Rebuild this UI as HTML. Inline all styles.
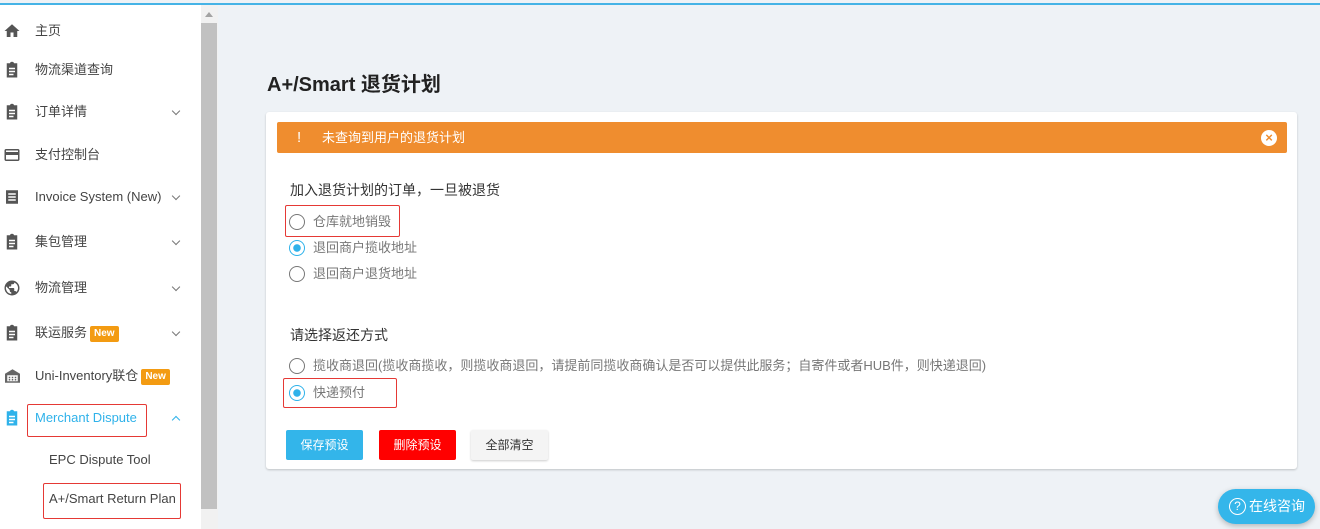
<!DOCTYPE html>
<html><head><meta charset="utf-8"><style>
*{margin:0;padding:0;box-sizing:border-box}
body{width:1320px;height:529px;overflow:hidden;background:#eef2f6;font-family:"Liberation Sans","Noto Sans CJK SC",sans-serif;position:relative}
.top{position:absolute;left:0;top:3px;width:1320px;height:2px;background:#45b3e6}
.side{position:absolute;left:0;top:5px;width:201px;height:524px;background:#fff}
.sb{position:absolute;left:201px;top:5px;width:17px;height:524px;background:#f1f1f1}
.thumb{position:absolute;left:201px;top:23px;width:16px;height:486px;background:#c1c1c1}
.it{position:absolute;left:0;width:200px;font-size:13px;color:#444;height:20px;line-height:20px}
.it .t{position:absolute;left:35px;top:0;white-space:nowrap}
.it svg.ic{position:absolute;left:3px;top:1px}
.chev{position:absolute;left:173px;top:6px;width:6px;height:6px;border-right:1.5px solid #777;border-bottom:1.5px solid #777;transform:rotate(45deg)}
.new{display:inline-block;background:#f39b12;color:#fff;font-size:10px;font-weight:bold;padding:0 4px;line-height:16px;border-radius:2px;margin-left:3px;vertical-align:1px}
.red{position:absolute;border:1.5px solid #e53935;border-radius:2px}
.card{position:absolute;left:266px;top:112px;width:1031px;height:357px;background:#fff;border-radius:3px;box-shadow:0 1px 2px rgba(0,0,0,.2)}
.alert{position:absolute;left:277px;top:122px;width:1010px;height:31px;background:#ef8d2f;border-radius:2px;color:#fff;font-size:13px;line-height:31px}
.r{position:absolute;font-size:13px;color:#777;line-height:18px;padding-left:24px;white-space:nowrap}
.r:before{content:"";position:absolute;left:0;top:1px;width:14px;height:14px;border:1.7px solid #777;border-radius:50%}
.r.on:before{border-color:#2fb2ea;background:radial-gradient(circle,#2fb2ea 3.5px,#fff 4px)}
.btn{position:absolute;top:430px;height:30px;font-size:12px;line-height:30px;text-align:center;border-radius:2px}
</style></head><body>
<div class="top"></div>
<div class="side"></div>
<div class="sb"></div><div class="thumb"></div>
<div style="position:absolute;left:205px;top:12px;width:0;height:0;border-left:4px solid transparent;border-right:4px solid transparent;border-bottom:5px solid #a3a3a3"></div>

<div class="it" style="top:21px"><svg class="ic" width="18" height="18" viewBox="0 0 24 24"><path d="M10 20v-6h4v6h5v-8h3L12 3 2 12h3v8z" fill="#555"/></svg><span class="t">主页</span></div>
<div class="it" style="top:60px"><svg class="ic" width="18" height="18" viewBox="0 0 24 24"><path d="M19 3h-4.2C14.4 1.8 13.3 1 12 1s-2.4.8-2.8 2H5v19h14zM8 9h8v2H8zm0 4h8v2H8zm0 4h6v2H8z" fill="#555"/></svg><span class="t">物流渠道查询</span></div>
<div class="it" style="top:102px"><svg class="ic" width="18" height="18" viewBox="0 0 24 24"><path d="M19 3h-4.2C14.4 1.8 13.3 1 12 1s-2.4.8-2.8 2H5v19h14zM8 9h8v2H8zm0 4h8v2H8zm0 4h6v2H8z" fill="#555"/></svg><span class="t">订单详情</span><i class="chev"></i></div>
<div class="it" style="top:145px"><svg class="ic" width="18" height="18" viewBox="0 0 24 24"><path d="M20 4H4c-1.1 0-2 .9-2 2v12c0 1.1.9 2 2 2h16c1.1 0 2-.9 2-2V6c0-1.1-.9-2-2-2zm0 14H4v-6h16zm0-10H4V6h16z" fill="#555"/></svg><span class="t">支付控制台</span></div>
<div class="it" style="top:187px"><svg class="ic" width="18" height="18" viewBox="0 0 24 24"><path d="M4 3h16v18H4zM7 7h10v2H7zm0 4h10v2H7zm0 4h10v2H7z" fill="#555" fill-rule="evenodd"/></svg><span class="t">Invoice System (New)</span><i class="chev"></i></div>
<div class="it" style="top:232px"><svg class="ic" width="18" height="18" viewBox="0 0 24 24"><path d="M19 3h-4.2C14.4 1.8 13.3 1 12 1s-2.4.8-2.8 2H5v19h14zM8 9h8v2H8zm0 4h8v2H8zm0 4h6v2H8z" fill="#555"/></svg><span class="t">集包管理</span><i class="chev"></i></div>
<div class="it" style="top:278px"><svg class="ic" width="18" height="18" viewBox="0 0 24 24"><path d="M12 2a10 10 0 100 20 10 10 0 000-20zm-1 17.9A8 8 0 014.2 9.8L9 14.6v1a2 2 0 002 2zm6.9-2.5A2 2 0 0016 16h-1v-3a1 1 0 00-1-1H8v-2h2a1 1 0 001-1V7h2a2 2 0 002-2v-.4a8 8 0 012.9 12.8z" fill="#555"/></svg><span class="t">物流管理</span><i class="chev"></i></div>
<div class="it" style="top:323px"><svg class="ic" width="18" height="18" viewBox="0 0 24 24"><path d="M19 3h-4.2C14.4 1.8 13.3 1 12 1s-2.4.8-2.8 2H5v19h14zM8 9h8v2H8zm0 4h8v2H8zm0 4h6v2H8z" fill="#555"/></svg><span class="t">联运服务<span class="new">New</span></span><i class="chev"></i></div>
<div class="it" style="top:366px"><svg class="ic" width="19" height="18" viewBox="0 0 24 24"><path d="M12 3L2 9v12h20V9zM5 11h14v8H5z M7 13h2v2H7zm4 0h2v2h-2zm4 0h2v2h-2zm-8 3h2v2H7zm4 0h2v2h-2zm4 0h2v2h-2z" fill="#666" fill-rule="evenodd"/></svg><span class="t">Uni-Inventory联仓<span class="new">New</span></span></div>
<div class="it" style="top:408px"><svg class="ic" width="18" height="18" viewBox="0 0 24 24"><path d="M19 3h-4.2C14.4 1.8 13.3 1 12 1s-2.4.8-2.8 2H5v19h14zM8 9h8v2H8zm0 4h8v2H8zm0 4h6v2H8z" fill="#2fb2ea"/></svg><span class="t" style="color:#2fb2ea">Merchant Dispute</span><i class="chev" style="transform:rotate(-135deg);top:9px;border-color:#2fb2ea"></i></div>
<div class="red" style="left:27px;top:404px;width:120px;height:33px"></div>
<div class="it" style="top:450px"><span class="t" style="left:49px">EPC Dispute Tool</span></div>
<div class="it" style="top:489px"><span class="t" style="left:49px">A+/Smart Return Plan</span></div>
<div class="red" style="left:43px;top:483px;width:138px;height:36px"></div>

<div style="position:absolute;left:267px;top:68px;font-size:20px;font-weight:bold;color:#222">A+/Smart 退货计划</div>
<div class="card"></div>
<div class="alert"><span style="position:absolute;left:20px;font-size:15px">!</span><span style="position:absolute;left:45px">未查询到用户的退货计划</span>
<div style="position:absolute;right:10px;top:8px;width:16px;height:16px;border-radius:50%;background:#fff;color:#ef8d2f;font-size:13px;line-height:16px;text-align:center;font-weight:bold">×</div></div>
<div style="position:absolute;left:290px;top:180px;font-size:14px;color:#333">加入退货计划的订单，一旦被退货</div>
<div class="r" style="left:289px;top:213px">仓库就地销毁</div>
<div class="red" style="left:285px;top:205px;width:115px;height:32px"></div>
<div class="r on" style="left:289px;top:239px">退回商户揽收地址</div>
<div class="r" style="left:289px;top:265px">退回商户退货地址</div>
<div style="position:absolute;left:290px;top:325px;font-size:14px;color:#333">请选择返还方式</div>
<div class="r" style="left:289px;top:357px">揽收商退回(揽收商揽收，则揽收商退回，请提前同揽收商确认是否可以提供此服务；自寄件或者HUB件，则快递退回)</div>
<div class="r on" style="left:289px;top:384px">快递预付</div>
<div class="red" style="left:283px;top:378px;width:114px;height:30px"></div>
<div class="btn" style="left:286px;width:77px;background:#33b5ea;color:#fff">保存预设</div>
<div class="btn" style="left:379px;width:77px;background:#ff0000;color:#fff">删除预设</div>
<div class="btn" style="left:471px;width:77px;background:#f4f4f4;color:#333;box-shadow:0 1px 2px rgba(0,0,0,.2)">全部清空</div>
<div style="position:absolute;left:1218px;top:489px;width:97px;height:35px;border-radius:18px;background:#34b6ea;color:#fff;font-size:14px;line-height:35px;box-shadow:0 2px 6px rgba(0,0,0,.25)"><span style="position:absolute;left:11px;top:9px;width:17px;height:17px;border:1.5px solid #fff;border-radius:50%;font-size:12px;line-height:14px;text-align:center">?</span><span style="position:absolute;left:31px">在线咨询</span></div>
</body></html>
